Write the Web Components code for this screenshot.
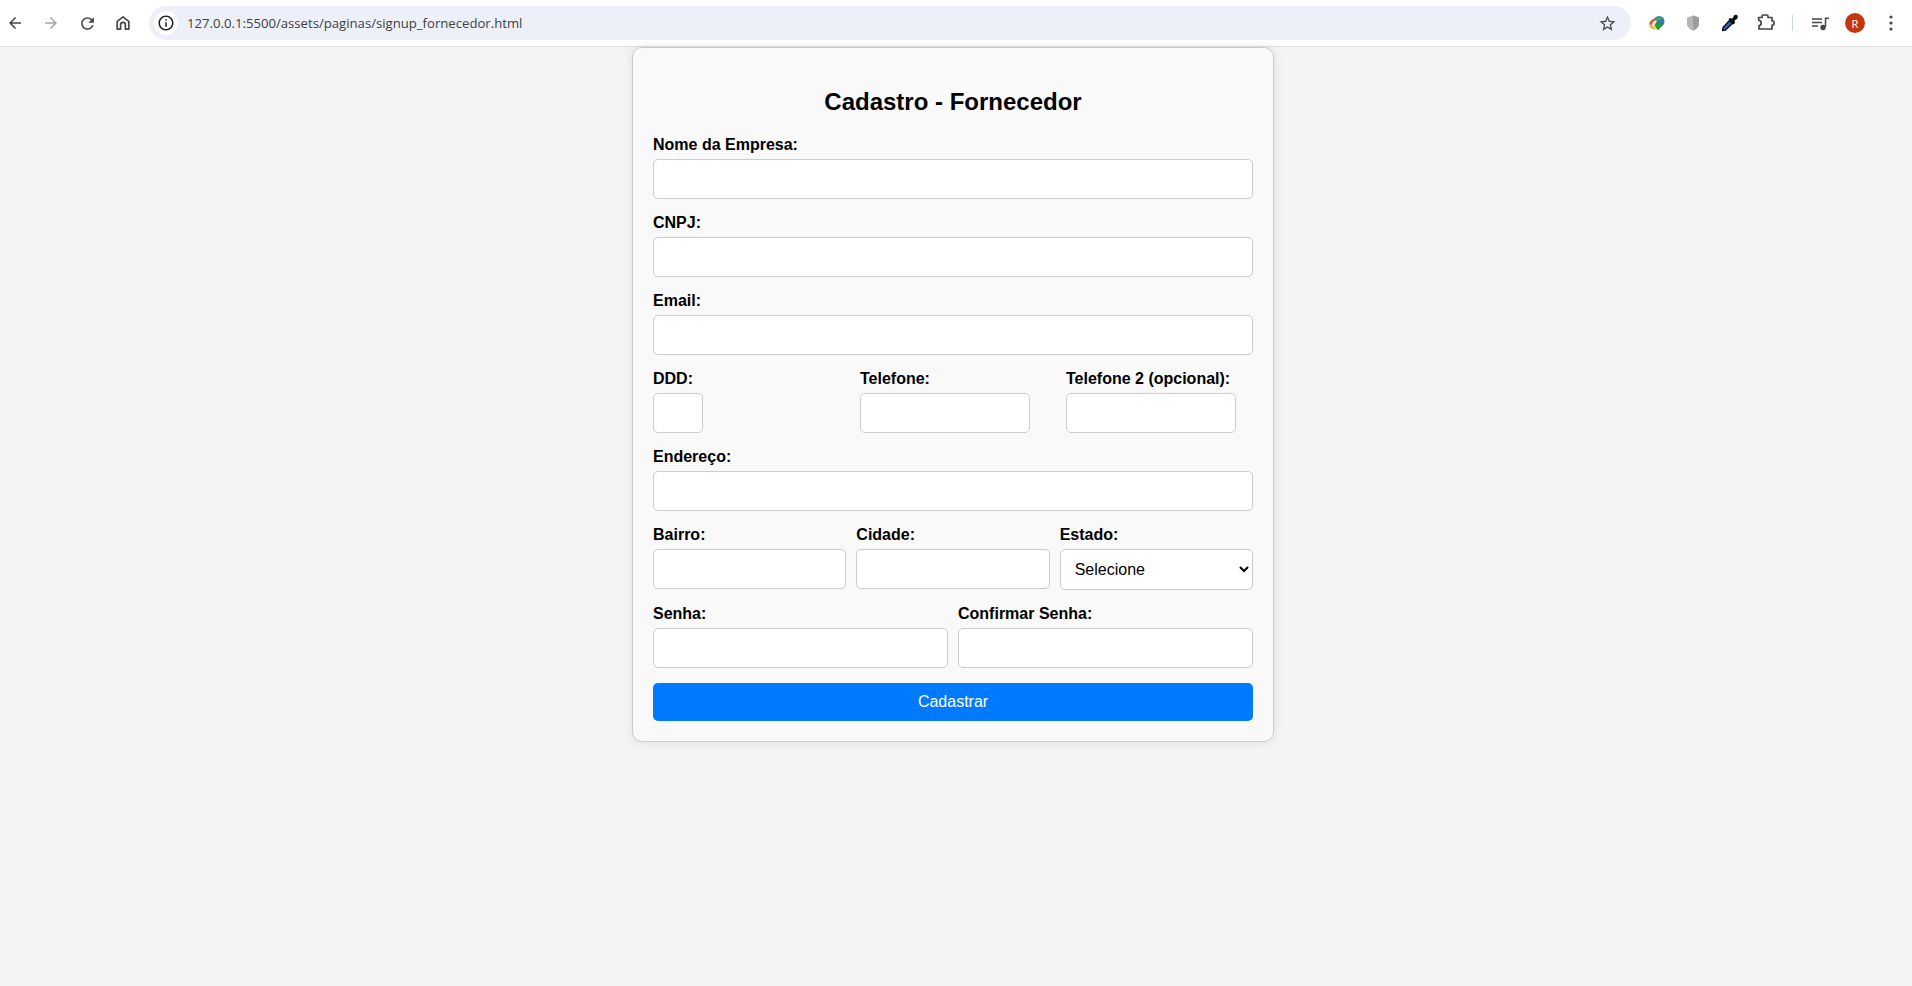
<!DOCTYPE html>
<html lang="pt-BR">
<head>
<meta charset="utf-8">
<title>Cadastro - Fornecedor</title>
<style>
  html, body { margin: 0; height: 100%; }
  body {
    background: #f4f4f4;
    font-family: "Liberation Sans", Arial, sans-serif;
    display: flex;
    flex-direction: column;
    overflow: hidden;
  }
</style>
</head>
<body>
<browser-bar url="127.0.0.1:5500/assets/paginas/signup_fornecedor.html"></browser-bar>

<signup-card heading="Cadastro - Fornecedor">
  <form-field label="Nome da Empresa:"></form-field>
  <form-field label="CNPJ:"></form-field>
  <form-field label="Email:"></form-field>
  <form-row columns="207px 206px 187px" gap="0">
    <form-field label="DDD:" width="50px"></form-field>
    <form-field label="Telefone:" width="170px"></form-field>
    <form-field label="Telefone 2 (opcional):" width="170px"></form-field>
  </form-row>
  <form-field label="Endereço:"></form-field>
  <form-row columns="1fr 1fr 1fr" gap="10px">
    <form-field label="Bairro:"></form-field>
    <form-field label="Cidade:"></form-field>
    <form-field label="Estado:" kind="select"></form-field>
  </form-row>
  <form-row columns="1fr 1fr" gap="10px">
    <form-field label="Senha:" type="password"></form-field>
    <form-field label="Confirmar Senha:" type="password"></form-field>
  </form-row>
  <submit-button>Cadastrar</submit-button>
</signup-card>

<script>
class ToolbarButton extends HTMLElement {
  constructor() {
    super();
    this.attachShadow({ mode: 'open' });
  }

  connectedCallback() {
    const size = this.getAttribute('size') || '36px';
    this.shadowRoot.innerHTML = `
      <style>
        :host {
          display: flex;
          align-items: center;
          justify-content: center;
          flex: none;
          width: ${size};
          height: 34px;
        }
      </style>
      <slot></slot>
    `;
  }
}

class BrowserBar extends HTMLElement {
  constructor() {
    super();
    this.attachShadow({ mode: 'open' });
  }

  connectedCallback() {
    const url = this.getAttribute('url');
    this.shadowRoot.innerHTML = `
      <style>
        :host {
          display: flex;
          align-items: center;
          flex: none;
          height: 46px;
          padding: 0 3px 0 0;
          background: #fff;
          border-bottom: 1px solid #dfe1e5;
          font-family: "Open Sans", Roboto, sans-serif;
        }
        .nav { display: flex; margin-left: -3px; }
        .omnibox {
          display: flex;
          align-items: center;
          flex: 1;
          height: 34px;
          margin-left: 8px;
          border-radius: 17px;
          background: #edf0f8;
        }
        .info {
          display: flex;
          align-items: center;
          justify-content: center;
          flex: none;
          width: 24px;
          height: 24px;
          margin-left: 5px;
          border-radius: 50%;
          background: #fff;
        }
        .url {
          flex: 1;
          margin-left: 9px;
          font-size: 13.15px;
          color: #3c4043;
          white-space: nowrap;
        }
        .star { margin-right: 5px; }
        .tools { display: flex; align-items: center; margin-left: 8px; }
        .sep { width: 1px; height: 16px; margin: 0 8px; background: #c7d7f0; flex: none; }
        .avatar {
          display: flex;
          align-items: center;
          justify-content: center;
          width: 20px;
          height: 20px;
          border-radius: 50%;
          background: #c5350f;
          color: #fff;
          font-size: 11px;
        }
        svg { display: block; }
      </style>
      <div class="nav">
        <toolbar-button><svg width="18" height="18" viewBox="0 0 24 24" fill="#444746"><path d="M20 11H7.830l5.590-5.590L12 4l-8 8 8 8 1.410-1.410L7.830 13H20v-2z"/></svg></toolbar-button>
        <toolbar-button><svg width="18" height="18" viewBox="0 0 24 24" fill="#a6a7a8"><path d="M12 4l-1.410 1.410L16.170 11H4v2h12.170l-5.580 5.590L12 20l8-8z"/></svg></toolbar-button>
        <toolbar-button><svg width="19" height="19" viewBox="0 0 24 24" fill="#444746"><path d="M17.650 6.350A7.958 7.958 0 0 0 12 4c-4.420 0-7.990 3.580-7.990 8s3.570 8 7.990 8c3.730 0 6.840-2.550 7.730-6h-2.080A5.990 5.990 0 0 1 12 18c-3.310 0-6-2.690-6-6s2.690-6 6-6c1.660 0 3.140.690 4.220 1.780L13 11h7V4l-2.350 2.350z"/></svg></toolbar-button>
        <toolbar-button><svg width="18" height="18" viewBox="0 0 18 18" fill="none" stroke="#444746" stroke-width="1.700" stroke-linejoin="round"><path d="M3.200 15.200V7.400L9 2.900l5.800 4.500v7.800h-3.400v-4.400a2.400 2.400 0 0 0-4.800 0v4.400z"/></svg></toolbar-button>
      </div>
      <div class="omnibox">
        <div class="info"><svg width="18" height="18" viewBox="0 0 24 24" fill="#1f1f1f"><path d="M11 7h2v2h-2zm0 4h2v6h-2zm1-9C6.480 2 2 6.480 2 12s4.480 10 10 10 10-4.480 10-10S17.520 2 12 2zm0 18c-4.410 0-8-3.590-8-8s3.590-8 8-8 8 3.590 8 8-3.590 8-8 8z"/></svg></div>
        <div class="url">${url}</div>
        <toolbar-button class="star" size="38px"><svg width="19" height="19" viewBox="0 0 24 24" fill="#444746"><path d="M22 9.240l-7.190-.620L12 2 9.190 8.630 2 9.240l5.460 4.730L5.820 21 12 17.270 18.180 21l-1.630-7.030L22 9.240zM12 15.400l-3.760 2.270 1-4.280-3.320-2.880 4.380-.380L12 6.100l1.710 4.040 4.380.380-3.320 2.880 1 4.280L12 15.400z"/></svg></toolbar-button>
      </div>
      <div class="tools">
        <toolbar-button><svg width="18" height="18" viewBox="0 0 18 18">
          <circle cx="11" cy="7.500" r="5.500" fill="#2f78c4"/>
          <path d="M8 4.500Q11 2.500 13.500 4.500 12.500 7 10 6.500z" fill="#59b13f"/>
          <path d="M1 10.500Q2 5.500 7 4.500L8 6Q4.500 7 4 11z" fill="#e0562d"/>
          <path d="M1 10.500Q2 15 7 15.500L8 13.500Q4.500 13 4 10.500z" fill="#e9b62c"/>
          <path d="M4 11Q4.500 7.500 8 6L9 8Q7 9 7 11z" fill="#f2f2e8"/>
          <path d="M8 8h3.500l1 2.500H15l-5 6-4-5.500h2.500z" fill="#2f9a2c"/>
        </svg></toolbar-button>
        <toolbar-button><svg width="14" height="16" viewBox="0 0 14 16"><path d="M7 .5 13 2.500V9c0 3-3 5.500-6 6.500C4 14.500 1 12 1 9V2.500z" fill="#b4b6b8"/><path d="M7 .5 13 2.500V9c0 3-3 5.500-6 6.500z" fill="#9a9c9f"/></svg></toolbar-button>
        <toolbar-button size="37px"><svg width="18" height="18" viewBox="0 0 18 18">
          <path d="M1.500 16.500 2 13.500 8.500 6.500 11.500 9.500 4.500 16z" fill="#2d5fd0" stroke="#0c0c0c" stroke-width="1.300" stroke-linejoin="round"/>
          <path d="M7.500 5.500 9 4 11.500 4.500 13 1.500Q15 0 16.500 1.500 17.500 3 16 5L13.500 6.500 14 9 12.500 10.500z" fill="#0c0c0c"/>
        </svg></toolbar-button>
        <toolbar-button><svg width="18" height="18" viewBox="0 0 18 18" fill="none" stroke="#444746" stroke-width="1.700" stroke-linejoin="round"><path d="M1.500 3.500H5V2.200Q5 1 6.200 1H9.800Q11 1 11 2.200V3.500H15V7H16Q17 7 17 8.200V10Q17 11 16 11H15V15H2V11.500Q4.200 11.500 4.200 9 4.200 6.500 2 6.500z"/></svg></toolbar-button>
        <div class="sep"></div>
        <toolbar-button><svg width="20" height="18" viewBox="0 0 20 18" fill="none" stroke="#444746" stroke-width="1.500"><path d="M3 5h10M3 8.500h10M3 12h6"/><path d="M16.500 13V4.200H20"/><circle cx="14" cy="13.500" r="2.700" fill="#444746" stroke="none"/></svg></toolbar-button>
        <toolbar-button><div class="avatar">R</div></toolbar-button>
        <toolbar-button><svg width="4" height="16" viewBox="0 0 4 16" fill="#444746"><circle cx="2" cy="2" r="1.600"/><circle cx="2" cy="8" r="1.600"/><circle cx="2" cy="14" r="1.600"/></svg></toolbar-button>
      </div>
    `;
  }
}

class SignupCard extends HTMLElement {
  constructor() {
    super();
    this.attachShadow({ mode: 'open' });
  }

  connectedCallback() {
    this.shadowRoot.innerHTML = `
      <style>
        :host {
          display: block;
          box-sizing: content-box;
          width: 600px;
          margin: 0 0 0 632px;
          padding: 20px;
          background: #f9f9f9;
          border: 1px solid #ccc;
          border-radius: 10px;
          box-shadow: 0 0 10px rgba(0, 0, 0, 0.1);
        }
        h2 {
          margin: 20px 0;
          font-size: 24px;
          line-height: 28px;
          font-weight: bold;
          text-align: center;
          color: #000;
        }
      </style>
      <h2>${this.getAttribute('heading')}</h2>
      <slot></slot>
    `;
  }
}

class FormRow extends HTMLElement {
  constructor() {
    super();
    this.attachShadow({ mode: 'open' });
  }

  connectedCallback() {
    this.shadowRoot.innerHTML = `
      <style>
        :host {
          display: grid;
          grid-template-columns: ${this.getAttribute('columns')};
          column-gap: ${this.getAttribute('gap') || '0'};
        }
      </style>
      <slot></slot>
    `;
  }
}

class FormField extends HTMLElement {
  constructor() {
    super();
    this.attachShadow({ mode: 'open' });
  }

  connectedCallback() {
    const width = this.getAttribute('width') || '100%';
    const label = this.getAttribute('label');
    const control = this.getAttribute('kind') === 'select'
      ? `<select><option>Selecione</option></select>`
      : `<input type="${this.getAttribute('type') || 'text'}">`;
    this.shadowRoot.innerHTML = `
      <style>
        :host { display: block; min-width: 0; margin-bottom: 15px; }
        label {
          display: block;
          margin-bottom: 5px;
          font-size: 16px;
          line-height: 18px;
          font-weight: bold;
          color: #000;
          white-space: nowrap;
        }
        input, select {
          display: block;
          box-sizing: border-box;
          width: ${width};
          padding: 10px;
          font: 16px "Liberation Sans", Arial, sans-serif;
          color: #000;
          background: #fff;
          border: 1px solid #ccc;
          border-radius: 5px;
        }
        input { height: 40px; }
        select { height: 41px; }
      </style>
      <label>${label}</label>
      ${control}
    `;
  }
}

class SubmitButton extends HTMLElement {
  constructor() {
    super();
    this.attachShadow({ mode: 'open' });
  }

  connectedCallback() {
    this.shadowRoot.innerHTML = `
      <style>
        :host { display: block; }
        button {
          display: block;
          width: 100%;
          height: 38px;
          padding: 10px;
          font: 16px "Liberation Sans", Arial, sans-serif;
          color: #fff;
          background: #007bff;
          border: none;
          border-radius: 5px;
          cursor: pointer;
        }
      </style>
      <button type="button"><slot></slot></button>
    `;
  }
}

customElements.define('toolbar-button', ToolbarButton);
customElements.define('browser-bar', BrowserBar);
customElements.define('signup-card', SignupCard);
customElements.define('form-row', FormRow);
customElements.define('form-field', FormField);
customElements.define('submit-button', SubmitButton);
</script>
</body>
</html>
